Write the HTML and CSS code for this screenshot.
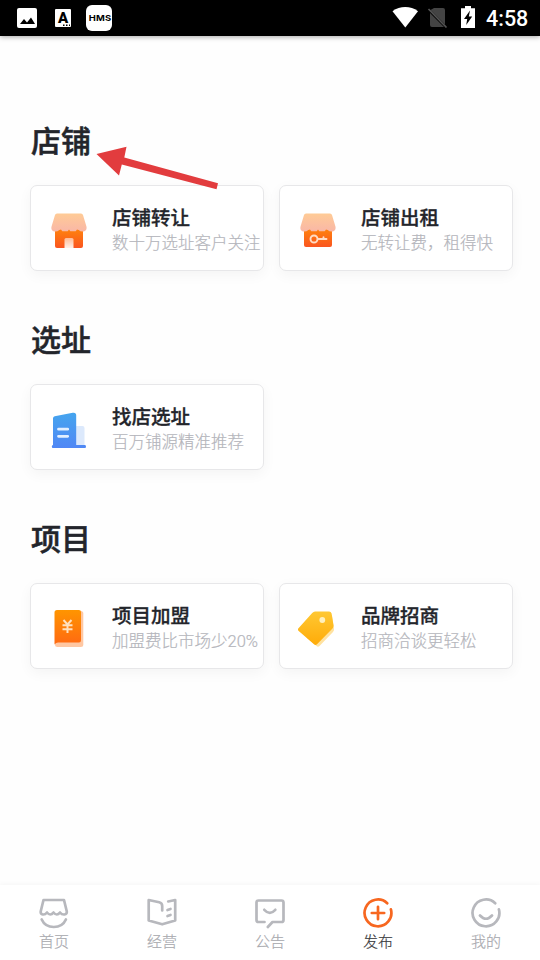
FILE: index.html
```html
<!DOCTYPE html>
<html lang="zh-CN">
<head>
<meta charset="utf-8">
<title>发布</title>
<link rel="stylesheet" href="styles.css">
</head>
<body>
<svg class="defs" width="0" height="0" aria-hidden="true">
  <defs>
    <linearGradient id="roof" x1="0" y1="0" x2="0" y2="1"><stop stop-color="#ffcb96"/><stop offset="1" stop-color="#f9b7a7"/></linearGradient>
    <linearGradient id="wall" x1="0" y1="0" x2="0" y2="1"><stop stop-color="#ff850c"/><stop offset="1" stop-color="#fa5520"/></linearGradient>
    <linearGradient id="door" x1="0" y1="0" x2="0" y2="1"><stop stop-color="#ffbc98"/><stop offset="1" stop-color="#fff0e7"/></linearGradient>
    <linearGradient id="blue" x1="0" y1="0" x2="0" y2="1"><stop stop-color="#45a5ee"/><stop offset="1" stop-color="#5087f5"/></linearGradient>
    <linearGradient id="book" x1="0" y1="0" x2="0" y2="1"><stop stop-color="#ff9500"/><stop offset="1" stop-color="#ff6912"/></linearGradient>
    <linearGradient id="tag" x1="0" y1="0" x2="0" y2="1"><stop stop-color="#ffc833"/><stop offset="1" stop-color="#ffab08"/></linearGradient>
  </defs>
</svg>
<header class="status">
  <svg class="status-left" width="120" height="36" viewBox="0 0 120 36">
    <rect x="17" y="8" width="20" height="20" rx="2" fill="#fff"/>
    <path d="M20 24l4-5 3 3.500 4-5 4 6.500z" fill="#000"/>
    <rect x="55" y="9" width="16" height="18" rx="1" fill="#fff"/>
    <path d="M63 25.200h1.500M66 25.200h1.500M69 25.200h1" stroke="#000" stroke-width="1.500"/>
    <text class="letter" x="63" y="22.500" text-anchor="middle">A</text>
    <rect x="86" y="5" width="26" height="26" rx="6" fill="#fff"/>
    <text class="hms" transform="translate(88.800 20.900) scale(1.180 1)">HMS</text>
  </svg>
  <svg class="status-right" width="92" height="36" viewBox="390 0 92 36">
    <path d="M392.500 11.200c7.500-5.600 18-5.600 25.500 0L405.300 27.500z" fill="#fff"/>
    <path d="M434 8h9q2 0 2 2v14.500L430.500 10zM430 13l14 14h-12q-2 0-2-2z" fill="#444"/>
    <path d="M428.500 9l18 18.500" stroke="#555" stroke-width="1.700"/>
    <path d="M461 8.200h4V6h6v2.200h4V28h-14z" fill="#fff"/>
    <path d="M470 10.500l-6 8.500h3.200l-1 6 6-8.500h-3.400z" fill="#000"/>
  </svg>
  <span class="time">4:58</span>
</header>
<main class="content">
  <section class="group">
    <h2 class="heading">店铺</h2>
    <div class="cards">
      <article class="card">
        <svg class="icon" viewBox="49 211 40 40">
          <path d="M55 228h28v18q0 2-2 2H57q-2 0-2-2z" fill="url(#wall)"/>
          <path d="M64.500 248v-8.500q0-1.500 1.500-1.500h6q1.500 0 1.500 1.500v8.500z" fill="url(#door)"/>
          <path d="M57 213.500h24q1.500 0 2 1.500l3.300 11c1 3-.5 5.500-3.300 5.500q-3 0-4.300-1.500l-1.700-.4-1.300 1.600h-5.400L69 229.600l-1.300 1.600h-5.400L61 229.600l-1.700.4q-1.500 1.500-4.300 1.500c-3 0-4.300-2.500-3.300-5.500l3.300-11q.4-1.500 2-1.500z" fill="url(#roof)"/>
        </svg>
        <div class="text"><h3 class="title">店铺转让</h3><p class="sub">数十万选址客户关注</p></div>
      </article>
      <article class="card">
        <svg class="icon" viewBox="49 211 40 40">
          <path d="M55 228h28v17q0 2-2 2H57q-2 0-2-2z" fill="url(#wall)"/>
          <path d="M57 213.500h24q1.500 0 2 1.500l3.300 11c1 3-.5 5.500-3.300 5.500q-3 0-4.300-1.500l-1.700-.4-1.300 1.600h-5.400L69 229.600l-1.300 1.600h-5.400L61 229.600l-1.700.4q-1.500 1.500-4.300 1.500c-3 0-4.300-2.500-3.300-5.500l3.300-11q.4-1.500 2-1.500z" fill="url(#roof)"/>
          <g fill="none" stroke="#ffdcc5" stroke-width="1.900" stroke-linecap="round"><circle cx="65" cy="239" r="3.500"/><path d="M69 239h8.500M74.500 239v-1.800"/></g>
        </svg>
        <div class="text"><h3 class="title">店铺出租</h3><p class="sub">无转让费，租得快</p></div>
      </article>
    </div>
    <svg class="arrow" width="126" height="48" viewBox="95 144 126 48"><path d="M96.500 154L126.500 146.700L124.300 157.400L218 183.200L216.500 189.300L121.800 164.600L119 175.500z" fill="#e23c3e"/></svg>
  </section>
  <section class="group">
    <h2 class="heading">选址</h2>
    <div class="cards">
      <article class="card">
        <svg class="icon" viewBox="49 410 40 40">
          <path d="M76 426h6.500q2 0 2 2v17H76z" fill="#dce9fc"/>
          <path d="M53 418.500q0-1.700 1.700-2.200l18-3.500q3.500-.6 3.500 2.500V445H85q1 0 1 1.500t-1 1.500H53q-1.200 0-1.200-1.500T53 445z" fill="url(#blue)"/>
          <path d="M58.500 429.200h9.200M58.500 436.300h9.200" stroke="#e2efff" stroke-width="2.800" stroke-linecap="round"/>
        </svg>
        <div class="text"><h3 class="title">找店选址</h3><p class="sub">百万铺源精准推荐</p></div>
      </article>
    </div>
  </section>
  <section class="group">
    <h2 class="heading">项目</h2>
    <div class="cards">
      <article class="card">
        <svg class="icon" viewBox="49 609 40 40">
          <rect x="55" y="611" width="28.300" height="36" rx="2.500" fill="#ffc7a2"/>
          <path d="M57 610h22q2 0 2 2v28q0 2.500-2 2.500H58q-2 0-3.500 2V612.500q0-2.500 2.500-2.500z" fill="url(#book)"/>
          <path d="M63.500 620l4 4.500 4-4.500M67.500 624.500v8.500M62.500 625.200h10M62.500 629.200h10" fill="none" stroke="#ffe1be" stroke-width="2"/>
        </svg>
        <div class="text"><h3 class="title">项目加盟</h3><p class="sub">加盟费比市场少20%</p></div>
      </article>
      <article class="card">
        <svg class="icon" viewBox="49 609 40 40">
          <path d="M68 614l15 2 2 13q.3 1.500-1 3L70.500 646q-1.500 1.500-3 0L58 638z" fill="#ffe2a0"/>
          <path d="M66 611.500h14q2 0 2.600 2l1.900 11.500q.3 2-1 3.500l-15.500 15.700q-1.500 1.500-3 0L49.700 631q-1.500-1.500 0-3l13.500-15q1.300-1.500 2.800-1.500z" fill="url(#tag)"/>
          <circle cx="73.300" cy="620" r="2.900" fill="#fff0bd"/>
        </svg>
        <div class="text"><h3 class="title">品牌招商</h3><p class="sub">招商洽谈更轻松</p></div>
      </article>
    </div>
  </section>
</main>
<nav class="tabs">
  <a class="tab"><svg class="tab-icon" viewBox="38 896 32 34"><path d="M43.500 900h20.500l2.800 11.500c.4 3.600-4.300 4-6.800 1q-3.200 4-6.500 0q-3.200 4-6.500 0c-2.500 3-6.700 2.600-6.300-1zM41.700 919.500c4.500 10 19.700 10 24.200 0"/></svg><span>首页</span></a>
  <a class="tab"><svg class="tab-icon" viewBox="146 896 32 34"><path d="M162.200 910.500V906q0-3-3-3.700L148.700 900v20.500l13.500 3.800 13-3.800V900l-7 1.500M167.500 910l3-1M167.500 916l3-1"/></svg><span>经营</span></a>
  <a class="tab"><svg class="tab-icon" viewBox="254 896 32 34"><path d="M264.500 922h-6q-2 0-2-2v-17.500q0-2 2-2h23q2 0 2 2V920q0 2-2 2h-9l-4.700 5M264.300 909.800q5.500 6 11 0"/></svg><span>公告</span></a>
  <a class="tab active"><svg class="tab-icon" viewBox="362 896 32 34"><path d="M387.200 903.200A13.400 13.400 0 1 0 390.900 909.400M371.800 913h12.400M378 906.800v12.400"/></svg><span>发布</span></a>
  <a class="tab"><svg class="tab-icon" viewBox="470 896 32 34"><path d="M495.200 903.200A13.400 13.400 0 1 0 498.900 909.400M480 915.500q6 6.500 12 0"/></svg><span>我的</span></a>
</nav>
</body>
</html>
```

FILE: styles.css
```css
* { box-sizing: border-box; }

body {
  margin: 0;
  width: 540px;
  height: 960px;
  display: flex;
  flex-direction: column;
  overflow: hidden;
  background: #fefefe;
  color: #23252b;
  font-family: Roboto, "Noto Sans CJK SC", sans-serif;
}

.defs { position: absolute; }

.status {
  height: 36px;
  flex: none;
  display: flex;
  align-items: center;
  background: #000;
  color: #fff;
  box-shadow: 0 1px 5px rgba(0, 0, 0, .35);
}

.status-right { margin-left: auto; }
.letter { font: 900 15px Roboto, sans-serif; }
.hms { font: 700 8px Inter, sans-serif; letter-spacing: .2px; }

.time {
  width: 58px;
  padding: 2px 0 0 4px;
  font-size: 21.500px;
  font-weight: 500;
  line-height: 36px;
}

.content { flex: 1; padding: 79px 27px 0 30px; }
.group { position: relative; height: 199px; }

.heading {
  margin: 0;
  height: 70px;
  padding: 5px 0 0 1px;
  font-size: 30px;
  font-weight: 500;
  line-height: 44px;
  -webkit-text-stroke: .5px currentColor;
}

.cards {
  display: grid;
  grid-template-columns: 234px 234px;
  gap: 15px;
}

.card {
  height: 86px;
  display: flex;
  align-items: flex-start;
  padding: 25px 0 0 18px;
  overflow: hidden;
  border: 1px solid #e7e7e9;
  border-radius: 7px;
  background: #fff;
  box-shadow: 0 4px 14px rgba(0, 0, 0, .045);
}

.icon { width: 40px; height: 40px; flex: none; }
.text { margin: -6px 0 0 23px; white-space: nowrap; }

.title {
  margin: 0;
  font-size: 19.500px;
  font-weight: 500;
  line-height: 28px;
  -webkit-text-stroke: .3px currentColor;
}

.sub {
  margin: 0;
  color: #b4b5bb;
  font-size: 16.500px;
  font-weight: 300;
  line-height: 22px;
  -webkit-text-stroke: .2px currentColor;
}

.arrow { position: absolute; left: 65px; top: 29px; }

.tabs {
  height: 75px;
  flex: none;
  display: grid;
  grid-template-columns: repeat(5, 1fr);
  background: #fff;
  box-shadow: 0 -1px 5px rgba(0, 0, 0, .04);
}

.tab {
  display: flex;
  flex-direction: column;
  align-items: center;
  padding-top: 11px;
  color: #a9aaaf;
  font-size: 15px;
  font-weight: 300;
  line-height: 24px;
  -webkit-text-stroke: .2px currentColor;
}

.tab-icon {
  width: 32px;
  height: 34px;
  fill: none;
  stroke: #b7b8bd;
  stroke-width: 2.700;
  stroke-linecap: round;
  stroke-linejoin: round;
}

.active { color: #3a3b40; }
.active .tab-icon { stroke: #f76720; }
```
